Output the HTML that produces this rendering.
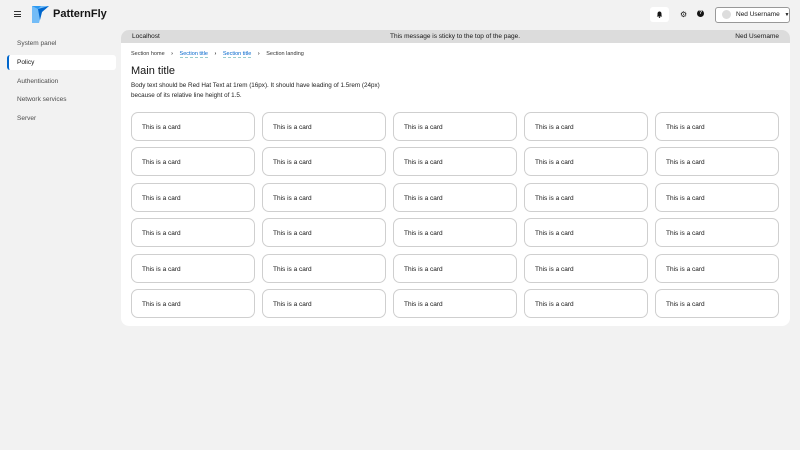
<!DOCTYPE html>
<html><head><style>
*{box-sizing:border-box;margin:0;padding:0}
body{width:800px;height:450px;background:#f2f2f2;font-family:"Liberation Sans",sans-serif;color:#151515;position:relative;overflow:hidden}
.a{position:absolute;white-space:nowrap}
.nav{font-size:6.5px;color:#4d4d4d}
.card{position:absolute;width:124px;height:29px;border:1px solid #cfcfcf;border-radius:7px;background:#fff;font-size:6.5px;padding:11px 0 0 10px}
</style></head><body>
<div class="a" style="left:14px;top:11px;width:7px;height:6px;border-top:1px solid #333;border-bottom:1px solid #333"><div style="margin-top:1.5px;border-top:1px solid #333"></div></div>
<svg class="a" style="left:32px;top:6px" width="17" height="17" viewBox="0 0 17 17"><polygon points="0,0 17,0 10,6 7,17 0,17" fill="#73bcf7"/><polygon points="6,3 17,0 10,6 8,14" fill="#0066cc"/><polygon points="0,0 9,0 6,3" fill="#2b9af3"/></svg>
<div class="a" style="left:53px;top:8px;font-size:11px;font-weight:bold">PatternFly</div>
<div class="a" style="left:650px;top:7px;width:19px;height:15px;background:#fff;border-radius:3px"></div>
<svg class="a" style="left:656px;top:11px" width="7" height="7" viewBox="0 0 7 7"><path d="M3.5 0.5C2 0.5 1.5 1.8 1.5 3V4.5L0.8 5.5H6.2L5.5 4.5V3C5.5 1.8 5 0.5 3.5 0.5Z" fill="#151515"/><circle cx="3.5" cy="6.3" r="0.7" fill="#151515"/></svg>
<div class="a" style="left:680px;top:10px;font-size:8px">&#9881;</div>
<div class="a" style="left:697px;top:10px;width:7px;height:7px;border-radius:50%;background:#151515;color:#fff;font-size:5px;text-align:center;line-height:7px;font-weight:bold">?</div>
<div class="a" style="left:715px;top:7px;width:75px;height:16px;border:1px solid #999;border-radius:3px;background:#fff;font-size:6.5px;line-height:14px;padding-left:20px">Ned Username <span style="font-size:5px;margin-left:3px">&#9660;</span></div>
<div class="a" style="left:722px;top:10px;width:9px;height:9px;border-radius:50%;background:#ddd"></div>
<div class="a nav" style="left:17px;top:40px">System panel</div>
<div class="a" style="left:7px;top:55px;width:109px;height:15px;background:#fff;border-radius:3px;border-left:2px solid #0066cc;font-size:6.5px;padding:4px 0 0 8px">Policy</div>
<div class="a nav" style="left:17px;top:78px">Authentication</div>
<div class="a nav" style="left:17px;top:96px">Network services</div>
<div class="a nav" style="left:17px;top:115px">Server</div>
<div class="a" style="left:121px;top:30px;width:669px;height:296px;background:#fff;border-radius:8px;overflow:hidden">
<div style="height:13px;background:#dcdcdc;font-size:6.5px;line-height:13px;padding:0 11px;position:relative"><span>Localhost</span><span class="a" style="left:269px">This message is sticky to the top of the page.</span><span class="a" style="right:11px">Ned Username</span></div>
</div>
<div class="a" style="left:131px;top:51px;font-size:5.5px;color:#333">Section home <b style="margin:0 5px">›</b> <span style="color:#0066cc;border-bottom:1px dashed #9cc">Section title</span> <b style="margin:0 5px">›</b> <span style="color:#0066cc;border-bottom:1px dashed #9cc">Section title</span> <b style="margin:0 5px">›</b> Section landing</div>
<div class="a" style="left:131px;top:65px;font-size:11px">Main title</div>
<div class="a" style="left:131px;top:81px;font-size:6.3px;line-height:9.5px;width:260px;color:#222;white-space:normal">Body text should be Red Hat Text at 1rem (16px). It should have leading of 1.5rem (24px) because of its relative line height of 1.5.</div>
<div id="g"></div>
<script>
var h='',xs=[131,262,393,524,655],ys=[112,147,183,218,254,289];
ys.forEach(function(y){xs.forEach(function(x){h+='<div class="card" style="left:'+x+'px;top:'+y+'px">This is a card</div>'})});
document.getElementById('g').innerHTML=h;
</script>
</body></html>
